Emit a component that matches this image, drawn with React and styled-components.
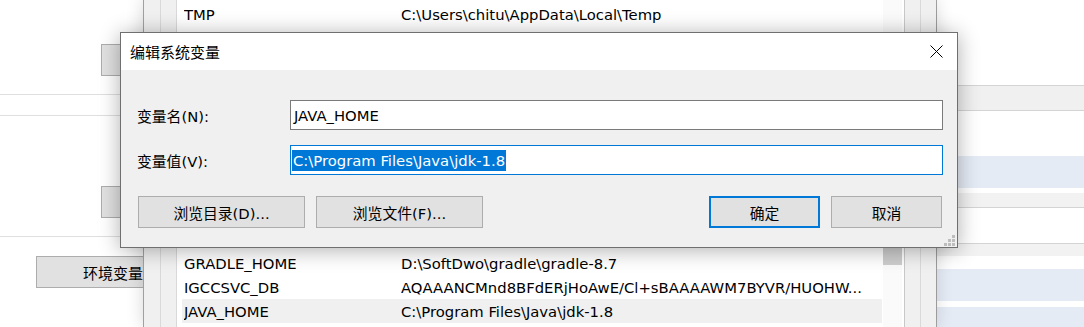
import React from 'react';
import styled, { createGlobalStyle } from 'styled-components';

const GlobalStyle = createGlobalStyle`
  html, body { margin: 0; padding: 0; background: #fff; overflow: hidden; }
  body {
    font-family: "DejaVu Sans", "Noto Sans CJK SC", sans-serif;
    font-size: 14.8px;
    color: #000;
  }
  * { box-sizing: border-box; }
`;

const Screen = styled.div`
  position: relative;
  width: 1084px;
  height: 327px;
  overflow: hidden;
  display: flex;
  background: #fff;
`;

/* ---------- left window (System Properties) ---------- */
const LeftPanel = styled.div`
  flex: 0 0 143px;
  display: flex;
  flex-direction: column;
  overflow: hidden;
  background: #fff;
`;

const SideButton = styled.div`
  flex: none;
  height: 32px;
  width: ${p => p.$width}px;
  margin-top: ${p => p.$top}px;
  margin-left: ${p => p.$left}px;
  background: #e1e1e1;
  border: 1px solid #adadad;
  display: flex;
  align-items: center;
  justify-content: center;
  white-space: nowrap;
  font-size: 15px;
`;

const HLine = styled.div`
  flex: none;
  height: 1px;
  margin-top: ${p => p.$top}px;
  background: #dfdfdf;
`;

/* ---------- middle window (Environment Variables) ---------- */
const MiddleWindow = styled.div`
  flex: 0 0 793px;
  display: flex;
  position: relative;
  z-index: 1;
  background: #fff;
  box-shadow: 0 0 16px rgba(0, 0, 0, 0.16);
`;

const FrameStrip = styled.div`
  flex: 0 0 ${p => p.$w}px;
  border-left: 1px solid ${p => p.$line};
  background: #f0f0f0;
`;

const ListArea = styled.div`
  flex: 0 0 707px;
  border-left: 1px solid #d9d9d9;
  padding: 2px 1px 0 5px;
  background: #fff;
  display: flex;
  flex-direction: column;
`;

const RowGroup = styled.div`
  display: flex;
  flex-direction: column;
  margin-top: ${p => p.$top || 0}px;
`;

const Row = styled.div`
  display: flex;
  align-items: center;
  height: 24px;
  padding-left: 2px;
  white-space: nowrap;
  background: ${p => (p.$selected ? '#f0f0f0' : 'transparent')};
`;

const NameCell = styled.div`
  flex: 0 0 217px;
  overflow: hidden;
`;

const ValueCell = styled.div`
  flex: 1;
  overflow: hidden;
`;

const Scrollbar = styled.div`
  flex: 0 0 19px;
  background: #fafafa;
  padding-top: 200px;
`;

const Thumb = styled.div`
  height: 65px;
  background: #cdcdcd;
`;

const Gap = styled.div`
  flex: 0 0 2px;
  background: #fff;
`;

/* ---------- right window ---------- */
const RightPanel = styled.div`
  flex: 1;
  display: flex;
  flex-direction: column;
  border-left: 1px solid #a8a8a8;
  background: #fff;
`;

const Band = styled.div`
  flex: none;
  height: ${p => p.$h}px;
  background: ${p => p.$bg || '#fff'};
  border-top: ${p => (p.$top ? '1px solid #d4d4d4' : 'none')};
  border-bottom: ${p => (p.$bottom ? '1px solid #d4d4d4' : 'none')};
`;

/* ---------- dialog ---------- */
const Dialog = styled.div`
  position: absolute;
  left: 120px;
  top: 32px;
  width: 838px;
  height: 216px;
  z-index: 5;
  display: flex;
  flex-direction: column;
  border: 1px solid #6f6f6f;
  background: #f0f0f0;
  box-shadow: 0 2px 20px rgba(0, 0, 0, 0.32);
`;

const TitleBar = styled.div`
  flex: 0 0 37px;
  display: flex;
  align-items: center;
  justify-content: space-between;
  padding: 0 14px 0 9px;
  background: #fff;
`;

const Title = styled.span`
  font-size: 15px;
`;

const Body = styled.div`
  flex: 1;
  display: flex;
  flex-direction: column;
  padding: 30px 14px 0 16px;
  position: relative;
`;

const FieldRow = styled.div`
  display: flex;
  align-items: center;
  margin-top: ${p => p.$top || 0}px;
`;

const Label = styled.div`
  flex: 0 0 153px;
  white-space: nowrap;
`;

const Input = styled.div`
  flex: 1;
  height: 30px;
  display: flex;
  align-items: center;
  background: #fff;
  border: 1px solid ${p => (p.$focused ? '#0078d7' : '#7a7a7a')};
  padding-left: ${p => (p.$focused ? 1 : 3)}px;
  white-space: nowrap;
`;

const Selection = styled.span`
  background: #0078d7;
  color: #fff;
  line-height: 21px;
  padding: 0 1px;
`;

const ButtonRow = styled.div`
  display: flex;
  gap: 11px;
  margin-top: 21px;
  padding: 0 1px;
`;

const Button = styled.div`
  flex: 0 0 ${p => p.$w}px;
  height: 32px;
  display: flex;
  align-items: center;
  justify-content: center;
  background: #e1e1e1;
  border: ${p => (p.$default ? '2px solid #0078d7' : '1px solid #adadad')};
  margin-left: ${p => (p.$push ? 'auto' : '0')};
  white-space: nowrap;
`;

const Grip = styled.svg`
  position: absolute;
  right: 2px;
  bottom: 1px;
`;

const CloseIcon = () => (
  <svg width="13" height="13" viewBox="0 0 13 13">
    <path d="M0.5 0.5 L12.5 12.5 M12.5 0.5 L0.5 12.5" stroke="#000" strokeWidth="1" fill="none" />
  </svg>
);

const topRows = [
  ['TMP', 'C:\\Users\\chitu\\AppData\\Local\\Temp'],
  ['NUMBER_OF_CPUS', 'C:\\Users\\2022\\OneDrive - 2023\\EVPS'],
];

const bottomRows = [
  ['HOMEPATH', 'C:\\Program Files\\gradle'],
  ['GRADLE_HOME', 'D:\\SoftDwo\\gradle\\gradle-8.7'],
  ['IGCCSVC_DB', 'AQAAANCMnd8BFdERjHoAwE/Cl+sBAAAAWM7BYVR/HUOHW...'],
  ['JAVA_HOME', 'C:\\Program Files\\Java\\jdk-1.8', true],
];

export default function App() {
  return (
    <>
      <GlobalStyle />
      <Screen>
        <LeftPanel>
          <SideButton $top={44} $left={101} $width={80} />
          <HLine $top={18} />
          <HLine $top={20} />
          <SideButton $top={70} $left={101} $width={80} />
          <HLine $top={18} />
          <SideButton $top={19} $left={36} $width={154}>环境变量</SideButton>
        </LeftPanel>

        <MiddleWindow>
          <FrameStrip $w={17} $line="#a0a0a0" />
          <FrameStrip $w={16} $line="#d9d9d9" />
          <ListArea>
            <RowGroup>
              {topRows.map(([n, v]) => (
                <Row key={n}>
                  <NameCell>{n}</NameCell>
                  <ValueCell>{v}</ValueCell>
                </Row>
              ))}
            </RowGroup>
            <RowGroup $top={177}>
              {bottomRows.map(([n, v, sel]) => (
                <Row key={n} $selected={sel}>
                  <NameCell>{n}</NameCell>
                  <ValueCell>{v}</ValueCell>
                </Row>
              ))}
            </RowGroup>
          </ListArea>
          <Scrollbar>
            <Thumb />
          </Scrollbar>
          <Gap />
          <FrameStrip $w={16} $line="#c8c8c8" />
          <FrameStrip $w={16} $line="#d9d9d9" />
        </MiddleWindow>

        <RightPanel>
          <Band $h={85} />
          <Band $h={26} $bg="#f0f0f0" $top $bottom />
          <Band $h={45} />
          <Band $h={32} $bg="#e5ebf5" />
          <Band $h={5} />
          <Band $h={15} $bg="#f2f2f2" $bottom />
          <Band $h={35} />
          <Band $h={13} $bg="#f2f2f2" $top />
          <Band $h={13} />
          <Band $h={32} $bg="#e5ebf5" />
          <Band $h={6} />
          <Band $h={32} $bg="#e5ebf5" />
        </RightPanel>

        <Dialog>
          <TitleBar>
            <Title>编辑系统变量</Title>
            <CloseIcon />
          </TitleBar>
          <Body>
            <FieldRow>
              <Label>变量名(N):</Label>
              <Input>JAVA_HOME</Input>
            </FieldRow>
            <FieldRow $top={15}>
              <Label>变量值(V):</Label>
              <Input $focused>
                <Selection>C:\Program Files\Java\jdk-1.8</Selection>
              </Input>
            </FieldRow>
            <ButtonRow>
              <Button $w={167}>浏览目录(D)...</Button>
              <Button $w={167}>浏览文件(F)...</Button>
              <Button $w={111} $push $default>确定</Button>
              <Button $w={111}>取消</Button>
            </ButtonRow>
            <Grip width="11" height="11" viewBox="0 0 11 11">
              <g fill="#bdbdbd">
                <rect x="8" y="0" width="3" height="3" />
                <rect x="4" y="4" width="3" height="3" />
                <rect x="8" y="4" width="3" height="3" />
                <rect x="0" y="8" width="3" height="3" />
                <rect x="4" y="8" width="3" height="3" />
                <rect x="8" y="8" width="3" height="3" />
              </g>
            </Grip>
          </Body>
        </Dialog>
      </Screen>
    </>
  );
}
